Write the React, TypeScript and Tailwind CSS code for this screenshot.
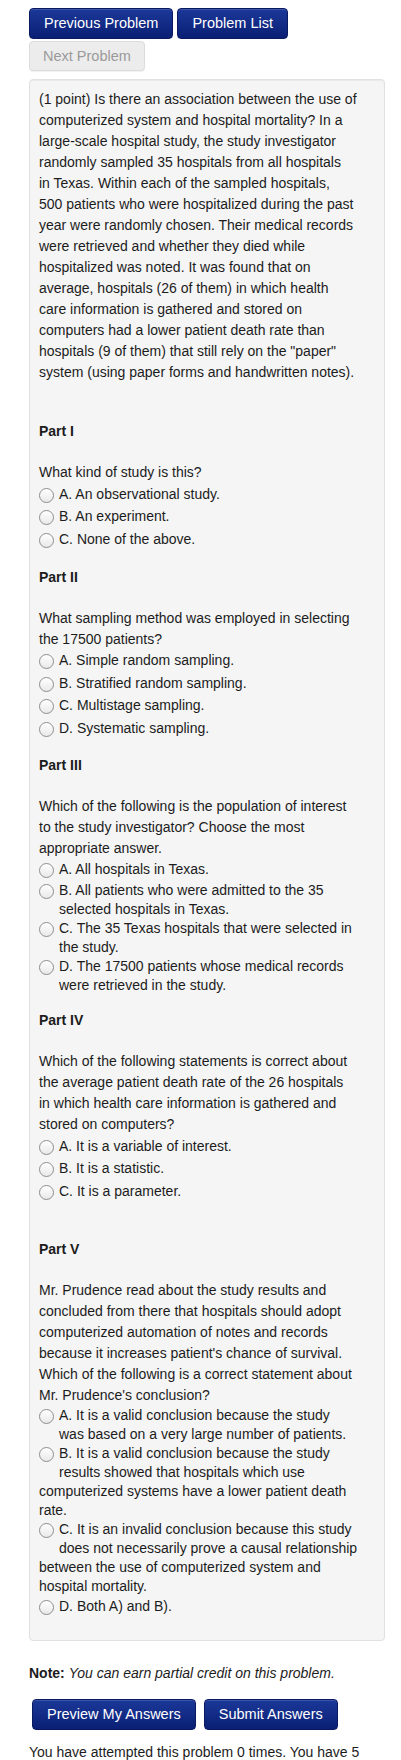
const FONT = 'font-["Liberation_Sans",Arial,Helvetica,sans-serif]'

const INTRO = [
  '(1 point) Is there an association between the use of',
  'computerized system and hospital mortality? In a',
  'large-scale hospital study, the study investigator',
  'randomly sampled 35 hospitals from all hospitals',
  'in Texas. Within each of the sampled hospitals,',
  '500 patients who were hospitalized during the past',
  'year were randomly chosen. Their medical records',
  'were retrieved and whether they died while',
  'hospitalized was noted. It was found that on',
  'average, hospitals (26 of them) in which health',
  'care information is gathered and stored on',
  'computers had a lower patient death rate than',
  'hospitals (9 of them) that still rely on the "paper"',
  'system (using paper forms and handwritten notes).',
]

// lines: wrapped text of one choice; outdent: index from which lines go back to the left edge
interface Choice { lines: string[]; outdent?: number }

interface Part { title: string; top: string; question: string[]; choices: Choice[] }

const PARTS: Part[] = [
  {
    title: 'Part I', top: 'mt-[38px]',
    question: ['What kind of study is this?'],
    choices: [
      { lines: ['A. An observational study.'] },
      { lines: ['B. An experiment.'] },
      { lines: ['C. None of the above.'] },
    ],
  },
  {
    title: 'Part II', top: 'mt-[16px]',
    question: ['What sampling method was employed in selecting', 'the 17500 patients?'],
    choices: [
      { lines: ['A. Simple random sampling.'] },
      { lines: ['B. Stratified random sampling.'] },
      { lines: ['C. Multistage sampling.'] },
      { lines: ['D. Systematic sampling.'] },
    ],
  },
  {
    title: 'Part III', top: 'mt-[15px]',
    question: ['Which of the following is the population of interest', 'to the study investigator? Choose the most', 'appropriate answer.'],
    choices: [
      { lines: ['A. All hospitals in Texas.'] },
      { lines: ['B. All patients who were admitted to the 35', 'selected hospitals in Texas.'] },
      { lines: ['C. The 35 Texas hospitals that were selected in', 'the study.'] },
      { lines: ['D. The 17500 patients whose medical records', 'were retrieved in the study.'] },
    ],
  },
  {
    title: 'Part IV', top: 'mt-[15px]',
    question: ['Which of the following statements is correct about', 'the average patient death rate of the 26 hospitals', 'in which health care information is gathered and', 'stored on computers?'],
    choices: [
      { lines: ['A. It is a variable of interest.'] },
      { lines: ['B. It is a statistic.'] },
      { lines: ['C. It is a parameter.'] },
    ],
  },
  {
    title: 'Part V', top: 'mt-[36px]',
    question: ['Mr. Prudence read about the study results and', 'concluded from there that hospitals should adopt', 'computerized automation of notes and records', "because it increases patient's chance of survival.", 'Which of the following is a correct statement about', "Mr. Prudence's conclusion?"],
    choices: [
      { lines: ['A. It is a valid conclusion because the study', 'was based on a very large number of patients.'] },
      { lines: ['B. It is a valid conclusion because the study', 'results showed that hospitals which use', 'computerized systems have a lower patient death', 'rate.'], outdent: 2 },
      { lines: ['C. It is an invalid conclusion because this study', 'does not necessarily prove a causal relationship', 'between the use of computerized system and', 'hospital mortality.'], outdent: 2 },
      { lines: ['D. Both A) and B).'] },
    ],
  },
]

function Radio() {
  return <span className="inline-block w-[15px] h-[15px] shrink-0 rounded-full border border-[#8e8e8e] bg-linear-to-b from-white to-[#e9e9e9] mr-[5px] mt-[2px]" />
}

function ChoiceRow({ c }: { c: Choice }) {
  const single = c.lines.length === 1
  return (
    <div>
      <div className={`flex items-center whitespace-nowrap ${single ? 'h-[22.5px]' : 'h-[19px]'}`}>
        <Radio />
        <span>{c.lines[0]}</span>
      </div>
      {c.lines.slice(1).map((l, i) => (
        <div key={i} className={`h-[19px] leading-[19px] whitespace-nowrap ${c.outdent && i + 1 >= c.outdent ? '' : 'pl-[20px]'}`}>{l}</div>
      ))}
    </div>
  )
}

function NavyButton({ label, className = '' }: { label: string; className?: string }) {
  return (
    <button className={`h-[31px] px-[14px] rounded-[4px] border border-[#0a1a60] bg-linear-to-b from-[#1b3899] to-[#0a1f74] text-white text-[14.5px] leading-none shadow-[inset_0_1px_0_rgba(255,255,255,0.15)] ${className}`}>
      {label}
    </button>
  )
}

export default function App() {
  return (
    <div className={`${FONT} text-[#1c1c1c] text-[14px] leading-[21px] bg-white min-h-[1760px] pt-[8px] pl-[29px]`}>
      <div className="flex gap-[4px]">
        <NavyButton label="Previous Problem" />
        <NavyButton label="Problem List" />
      </div>
      <button disabled className="mt-[2px] h-[30px] px-[13px] rounded-[4px] border border-[#dcdcdc] bg-[#ececec] text-[#9a9a9a] text-[14.5px] leading-none shadow-[0_1px_1px_rgba(0,0,0,0.06)]">
        Next Problem
      </button>

      <div className="mt-[8px] w-[356px] rounded-[4px] border border-[#e1e1e1] bg-[#f5f5f5] shadow-[inset_0_1px_1px_rgba(0,0,0,0.05)] pt-[9px] pb-[22px] pl-[9px] pr-[6px]">
        <div className="whitespace-nowrap">
          {INTRO.map((l, i) => <div key={i}>{l}</div>)}
        </div>

        {PARTS.map(p => (
          <div key={p.title}>
            <div className={`${p.top} font-bold`}>{p.title}</div>
            <div className="mt-[20px] whitespace-nowrap">
              {p.question.map((l, i) => <div key={i}>{l}</div>)}
            </div>
            {p.choices.map((c, i) => <ChoiceRow key={i} c={c} />)}
          </div>
        ))}
      </div>

      <p className="mt-[22px]">
        <b>Note:</b> <i>You can earn partial credit on this problem.</i>
      </p>

      <div className="mt-[15px] ml-[3px] flex gap-[8px]">
        <NavyButton label="Preview My Answers" />
        <NavyButton label="Submit Answers" />
      </div>

      <p className="mt-[12px] pr-[10px]">You have attempted this problem 0 times. You have 5 attempts remaining.</p>
    </div>
  )
}
